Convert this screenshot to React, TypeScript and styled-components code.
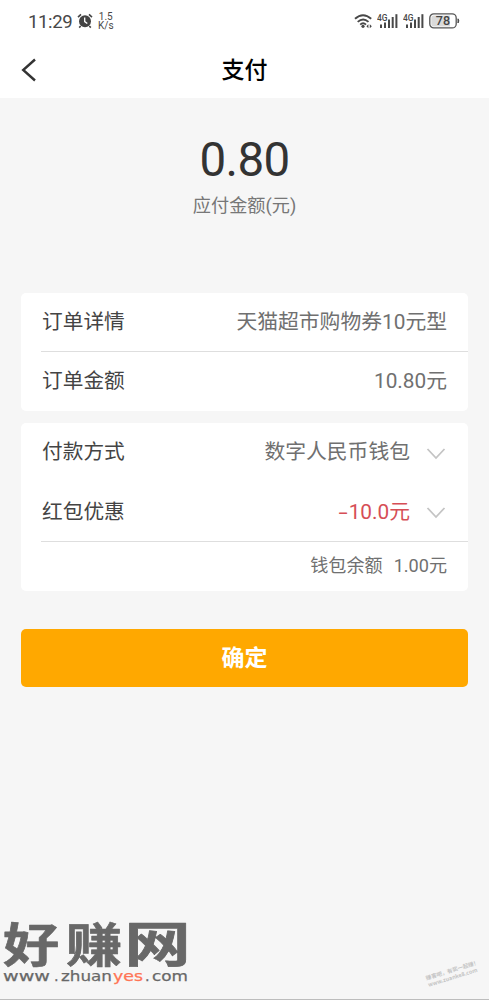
import React from "react";
import styled, { createGlobalStyle } from "styled-components";

const Global = createGlobalStyle`
  * { box-sizing: border-box; }
  body { margin: 0; background: #f6f6f6; font-family: Roboto, "Noto Sans CJK SC", sans-serif; }
`;

const Screen = styled.div`
  position: relative;
  width: 489px;
  height: 1000px;
  overflow: hidden;
  display: flex;
  flex-direction: column;
  background: #f6f6f6;
  border-bottom: 1px solid #bdbdbd;
`;

const StatusBar = styled.div`
  height: 42px;
  background: #fff;
  display: flex;
  align-items: center;
  padding: 0 28px 0 28px;
  color: #484848;
`;

const Clock = styled.span`
  font: 18.6px/24px Roboto, sans-serif;
  width: 49px;
  padding-top: 1px;
  letter-spacing: -0.4px;
`;

const Speed = styled.div`
  font: 400 10px/9px Roboto, sans-serif;
  text-align: center;
  margin-left: 5px;
`;

const StatusIcons = styled.div`
  margin-left: auto;
  display: flex;
  align-items: center;
  gap: 4px;
`;

const NavBar = styled.header`
  height: 56px;
  background: #fff;
  display: grid;
  grid-template-columns: 60px 1fr 60px;
  align-items: center;
`;

const BackButton = styled.button`
  border: 0;
  background: none;
  padding: 0 0 0 20px;
  display: flex;
`;

const Title = styled.h1`
  margin: 0;
  padding-top: 1px;
  font-size: 23px;
  line-height: 32px;
  font-weight: 500;
  color: #000;
  text-align: center;
`;

const Summary = styled.section`
  height: 195px;
  padding-top: 32px;
  display: flex;
  flex-direction: column;
  align-items: center;
`;

const Amount = styled.div`
  font-size: 47.5px;
  line-height: 60px;
  letter-spacing: -0.6px;
  color: #333;
`;

const AmountLabel = styled.div`
  font-size: 18.2px;
  line-height: 28px;
  margin-top: 2px;
  color: #777;
`;

const Card = styled.section`
  margin: 0 21px 12px;
  background: #fff;
  border-radius: 5px;
`;

const Row = styled.div<{ $height: number; $divided?: boolean }>`
  height: ${(p) => p.$height}px;
  margin-left: 20px;
  padding: 0 21px ${(p) => (p.$divided ? 0 : 1)}px 1px;
  display: flex;
  align-items: center;
  border-bottom: ${(p) => (p.$divided ? "1px solid #dedede" : "0")};
`;

const Label = styled.span`
  font-size: 20.7px;
  line-height: 30px;
  color: #444;
`;

const Value = styled.span<{ $accent?: boolean }>`
  margin-left: auto;
  font-size: 20.8px;
  line-height: 30px;
  color: ${(p) => (p.$accent ? "#d64e56" : "#707070")};
`;

const Minus = styled.span`
  display: inline-block;
  transform: scaleX(1.6);
  transform-origin: right;
  margin-right: 1px;
`;

const Balance = styled.span`
  margin-left: auto;
  display: flex;
  gap: 11px;
  font-size: 18.1px;
  line-height: 26px;
  color: #707070;
`;

const Submit = styled.button`
  margin: 26px 21px 0;
  height: 58px;
  border: 0;
  border-radius: 5px;
  background: #ffa800;
  color: #fff;
  font: 700 23px/32px "Noto Sans CJK SC", sans-serif;
  padding: 0 0 4px;
`;

const SiteMark = styled.svg`
  position: absolute;
  left: 0;
  top: 900px;
`;

const CornerMark = styled.div`
  position: absolute;
  left: 426px;
  top: 967px;
  transform: rotate(-17deg);
  font: 700 5.5px/7px "Noto Sans CJK SC", sans-serif;
  color: #c4c4c4;
  white-space: nowrap;
`;

const ChevronIcon = styled.svg`
  margin: 3px 1px 0 16px;
`;

const Chevron = () => (
  <ChevronIcon width="20" height="14" viewBox="0 0 20 14" fill="none">
    <path d="M1.5 2 10 11 18.5 2" stroke="#c4c4c4" strokeWidth="1.8" />
  </ChevronIcon>
);

const AlarmIcon = () => (
  <svg width="16" height="16" viewBox="0 0 16 16">
    <circle cx="8" cy="8.3" r="6" fill="#444" />
    <path d="M1 4.2 4 1.4M15 4.2 12 1.4M3.7 13 2.2 14.6M12.3 13l1.5 1.6" stroke="#444" strokeWidth="1.6" />
    <path d="M7.7 4.6v4l2.6 2" stroke="#fff" strokeWidth="1.3" fill="none" />
  </svg>
);

const WifiIcon = () => (
  <svg width="20" height="16" viewBox="0 0 20 16" fill="none" stroke="#484848" strokeWidth="1.9">
    <path d="M2 5.8q8-7.2 16.2 0M4.7 8.9q5.4-4.8 10.8 0M7.2 11.6q2.9-2.5 5.8 0" />
    <circle cx="10" cy="13.3" r="1.6" fill="#484848" stroke="none" />
    <path d="m15.4 11.3-2 2 2 2zM16.8 11.3l2 2-2 2z" fill="#484848" stroke="none" />
  </svg>
);

const SignalIcon = () => (
  <svg width="22" height="16" viewBox="0 0 22 16" fill="#484848">
    <text x="0" y="7.6" fontFamily="Roboto, sans-serif" fontSize="8.8" fontWeight="500" textLength="10.5" lengthAdjust="spacingAndGlyphs">4G</text>
    <rect x="3" y="11.5" width="2" height="3.5" />
    <rect x="7" y="9.5" width="2" height="5.5" />
    <rect x="11" y="6.5" width="2" height="8.5" />
    <rect x="14.7" y="4" width="2" height="11" />
    <rect x="18.4" y="1.2" width="2" height="13.8" />
  </svg>
);

const BatteryIcon = () => (
  <svg width="32" height="16" viewBox="0 0 32 16">
    <rect x="0.8" y="0.9" width="26.4" height="14" rx="4" fill="#fff" stroke="#555" strokeWidth="1.3" />
    <path d="M4.5 2.4H21v11H4.5q-2.2 0-2.2-2.2V4.6q0-2.2 2.2-2.2" fill="#dadada" />
    <path d="M29 5.8q1.7 2.1 0 4.2z" fill="#484848" stroke="#484848" />
    <text x="14" y="12.4" textAnchor="middle" fontFamily="Roboto, sans-serif" fontSize="12.6" fontWeight="500" fill="#444">78</text>
  </svg>
);

export default function App() {
  return (
    <Screen>
      <Global />
      <StatusBar>
        <Clock>11:29</Clock>
        <AlarmIcon />
        <Speed>1.5<br />K/s</Speed>
        <StatusIcons>
          <WifiIcon />
          <SignalIcon />
          <SignalIcon />
          <BatteryIcon />
        </StatusIcons>
      </StatusBar>
      <NavBar>
        <BackButton aria-label="返回">
          <svg width="18" height="24" viewBox="0 0 18 24" fill="none">
            <path d="M15 1.5 3.2 12 15 22.5" stroke="#333" strokeWidth="2.4" />
          </svg>
        </BackButton>
        <Title>支付</Title>
      </NavBar>
      <Summary>
        <Amount>0.80</Amount>
        <AmountLabel>应付金额(元)</AmountLabel>
      </Summary>
      <Card>
        <Row $height={59} $divided>
          <Label>订单详情</Label>
          <Value>天猫超市购物券10元型</Value>
        </Row>
        <Row $height={59}>
          <Label>订单金额</Label>
          <Value>10.80元</Value>
        </Row>
      </Card>
      <Card>
        <Row $height={59}>
          <Label>付款方式</Label>
          <Value>数字人民币钱包</Value>
          <Chevron />
        </Row>
        <Row $height={60} $divided>
          <Label>红包优惠</Label>
          <Value $accent><Minus>-</Minus>10.0元</Value>
          <Chevron />
        </Row>
        <Row $height={49}>
          <Balance><span>钱包余额</span><span>1.00元</span></Balance>
        </Row>
      </Card>
      <Submit>确定</Submit>
      <SiteMark width="200" height="95" viewBox="0 0 200 95" fill="#686868" stroke="#686868">
        <g fontFamily="Noto Sans CJK SC, sans-serif" fontSize="58" fontWeight="700" strokeWidth=".8" strokeLinejoin="round">
          <text transform="translate(3 62) scale(.97 .8)">好</text>
          <text transform="translate(66 62) scale(.97 .8)">赚</text>
          <text transform="translate(124.5 62) scale(1.14 .84)">网</text>
        </g>
        <g fontFamily="DejaVu Sans, sans-serif" fontSize="14.5" strokeWidth=".25">
          <text x="3" y="81" textLength="47" lengthAdjust="spacingAndGlyphs">www</text>
          <text x="54" y="81">.</text>
          <text x="61" y="81" textLength="51" lengthAdjust="spacingAndGlyphs">zhuan</text>
          <text x="113" y="81" textLength="30" lengthAdjust="spacingAndGlyphs" fill="#ff7455" stroke="#ff7455">yes</text>
          <text x="145" y="81">.</text>
          <text x="152" y="81" textLength="36" lengthAdjust="spacingAndGlyphs">com</text>
        </g>
      </SiteMark>
      <CornerMark>赚客吧，有奖一起赚！<br />www.zuanke8.com</CornerMark>
    </Screen>
  );
}
